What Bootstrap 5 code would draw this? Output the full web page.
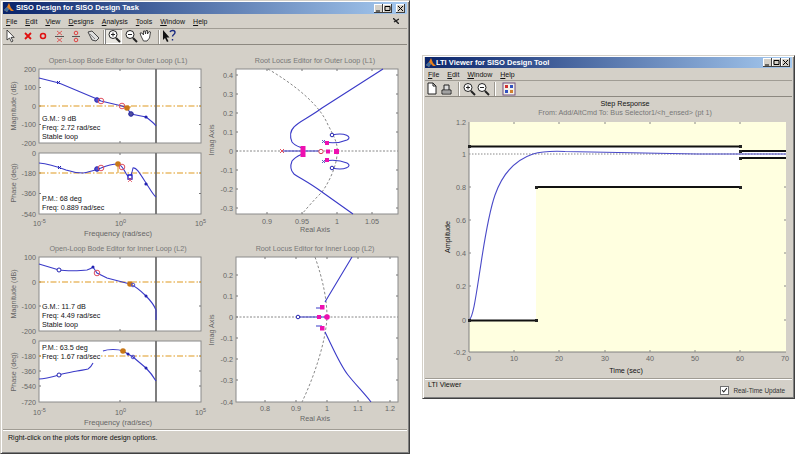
<!DOCTYPE html>
<html lang="en">
<head>
<meta charset="utf-8">
<title>SISO Design</title>
<link href="https://cdn.jsdelivr.net/npm/bootstrap@5.3.0/dist/css/bootstrap.min.css" rel="stylesheet">
<style>
html,body{margin:0;background:#fff;overflow:hidden;}
.stage{position:relative;width:800px;height:454px;font-family:"Liberation Sans",Arial,sans-serif;}
.win{position:absolute;background:#d4d0c8;border:1px solid #d4d0c8;border-right-color:#404040;border-bottom-color:#404040;box-shadow:inset 1px 1px 0 #fff,inset -1px -1px 0 #808080;padding:1px 2px 2px;}
.win-a{left:0;top:0;width:410px;height:454px;}
.win-b{left:422px;top:55px;width:373px;height:344px;}
.tbar{height:12px;flex:none;background:linear-gradient(90deg,#0a246a,#a6caf0);color:#fff;font-weight:700;font-size:7.5px;line-height:12px;padding-right:2px;}
.win-b .tbar{height:11px;line-height:11px;}
.tlogo{width:10px;height:10px;flex:none;margin:0 2px 0 1px;}
.win-b .tlogo{margin-right:0;}
.wbtn{width:9px;height:9px;background:#d4d0c8;box-shadow:inset -1px -1px 0 #404040,inset 1px 1px 0 #fff;display:block;}
.mbar{height:15px;flex:none;font-size:7px;line-height:15px;color:#111;padding-left:3px;border-bottom:1px solid #a09c94;}
.win-b .mbar{height:13px;line-height:13px;}
.mbar u{text-decoration-thickness:1px;text-underline-offset:1px;}
.tools{height:16px;flex:none;border-bottom:1px solid #8c8880;}
.tools-b{gap:2px;}
.tsep{width:2px;height:14px;background:#9c9890;border-right:1px solid #fff;flex:none;}
.tico{display:block;flex:none;}
.pressed{background:#e8e6e0;box-shadow:inset 1px 1px 0 #808080,inset -1px -1px 0 #fff;}
.canvas{display:block;flex:none;}
.canvas text{font-family:"Liberation Sans",Arial,sans-serif;font-size:7.2px;fill:#666;}
.canvas text.dk{fill:#111;}
.canvas text.tt{fill:#777;}
.canvas text.sup{font-size:5.5px;}
.canvas text.fq{font-size:7.6px;}
.stat{flex:1 1 auto;border-top:1px solid #a09c94;box-shadow:inset 0 1px 0 #fff;font-size:7.1px;color:#111;}
.stat-a{padding:3px 5px;line-height:10px;}
.stat-b{padding:2px 3px 0;line-height:9px;}
.chk{width:9px;height:9px;background:#fff;border:1px solid #707070;display:block;flex:none;}
.rtu{color:#333;padding-right:4px;padding-bottom:1px;font-size:6.4px;}
</style>
</head>
<body>
<div class="stage">

<div class="win win-a d-flex flex-column">
  <div class="tbar d-flex align-items-center">
    <svg class="tlogo" viewBox="0 0 10 10"><path d="M0 7 3 4 5 0 7 5 10 8 7 8 5 6 3 9Z" fill="#e8801c"/><path d="M3 4 5 6 3 9 0 7Z" fill="#3a6ea5"/></svg>
    <span class="flex-grow-1">SISO Design for SISO Design Task</span>
    <span class="d-flex">
      <svg class="wbtn" viewBox="0 0 9 9"><path d="M2 7h4" stroke="#000"/></svg>
      <svg class="wbtn" viewBox="0 0 9 9"><path d="M2 2.5h5M2 2.5v4h5v-4" stroke="#000" fill="none"/></svg>
      <svg class="wbtn ms-1" viewBox="0 0 9 9"><path d="M2 2 7 7M7 2 2 7" stroke="#000"/></svg>
    </span>
  </div>
  <div class="mbar d-flex gap-2">
    <span><u>F</u>ile</span><span><u>E</u>dit</span><span><u>V</u>iew</span><span><u>D</u>esigns</span><span><u>A</u>nalysis</span><span><u>T</u>ools</span><span><u>W</u>indow</span><span><u>H</u>elp</span>
    <svg class="ms-auto me-2 mt-1" width="6" height="6" viewBox="0 0 6 6"><path d="M0 0 6 6M1 4 6 1" stroke="#222" stroke-width="1.4"/></svg>
  </div>
  <div class="tools d-flex align-items-center">
    <svg class="tico" width="100" height="15" viewBox="3 29 100 15">
      <path d="M7 30v10l2.500-2 2 4 1.500-1-2-3.600h3.200Z" fill="#fff" stroke="#222" stroke-width=".8"/>
      <path d="M25 33 31 39M31 33 25 39" stroke="#e01010" stroke-width="1.800"/>
      <circle cx="43" cy="36" r="2.500" fill="none" stroke="#e01010" stroke-width="1.500"/>
      <path d="M57 31 62 35M62 31 57 35M57 38 62 42M62 38 57 42" stroke="#e04040" stroke-width=".8"/><path d="M55 36.500h9" stroke="#555"/>
      <circle cx="76" cy="33" r="1.800" fill="none" stroke="#e04040"/><circle cx="76" cy="40" r="1.800" fill="none" stroke="#e04040"/><path d="M72 36.500h8" stroke="#555"/>
      <path d="M88 32 92 31 99 38 96 41 92 40Z" fill="#ddd" stroke="#444"/><path d="M90 34 95 39" stroke="#888"/>
    </svg>
    <span class="tsep"></span>
    <svg class="tico pressed" width="17" height="15" viewBox="105 29 17 15"><circle cx="113" cy="34.500" r="4" fill="#fff" stroke="#222"/><path d="M116 38 120 42" stroke="#222" stroke-width="2"/><path d="M111 34.500h4M113 32.500v4" stroke="#222"/></svg>
    <svg class="tico" width="16" height="15" viewBox="122 29 16 15"><circle cx="130" cy="34.500" r="4" fill="#fff" stroke="#222"/><path d="M133 38 137 42" stroke="#222" stroke-width="2"/><path d="M128 34.500h4" stroke="#222"/></svg>
    <svg class="tico" width="16" height="15" viewBox="139 29 16 15"><path d="M142 36 141 33 143 33 144.500 35 144.500 31 146 31 146.500 34 147 30.500 148.500 30.500 148.500 34 150 31.500 151.500 32 150.500 38 148 41 144.500 41Z" fill="#fff" stroke="#222" stroke-width=".8"/></svg>
    <span class="tsep ms-1"></span>
    <svg class="tico" width="18" height="15" viewBox="160 29 18 15"><path d="M163 30v10l2-2 2 4 1.500-.8-2-3.700h3Z" fill="#111"/><path d="M170 32c1-2 5-2 5 .5 0 2-2.500 2-2.500 4M172.500 39v1.600" stroke="#1a2a80" stroke-width="1.400" fill="none"/></svg>
  </div>
  <svg class="canvas" width="404" height="384" viewBox="3 45 404 384">
    <!-- titles -->
    <text x="118" y="63" text-anchor="middle" class="tt">Open-Loop Bode Editor for Outer Loop (L1)</text>
    <text x="315" y="63" text-anchor="middle" class="tt">Root Locus Editor for Outer Loop (L1)</text>
    <text x="118" y="250.500" text-anchor="middle" class="tt">Open-Loop Bode Editor for Inner Loop (L2)</text>
    <text x="315" y="250.500" text-anchor="middle" class="tt">Root Locus Editor for Inner Loop (L2)</text>

    <!-- frames -->
    <g fill="#fff" stroke="#8a8a8a">
      <rect x="39" y="69" width="162" height="74"/><rect x="39" y="153" width="162" height="61"/>
      <rect x="39" y="257" width="162" height="74"/><rect x="39" y="341" width="162" height="61"/>
      <rect x="236" y="69" width="162" height="145"/><rect x="236" y="257" width="162" height="145"/>
    </g>
    <!-- ticks -->
    <g stroke="#777" fill="none">
      <path d="M39 87.500h2M39 106h2M39 124.500h2M199 87.500h2M199 106h2M199 124.500h2M120 69v2M120 141v2"/>
      <path d="M39 173h2M39 193.500h2M199 173h2M199 193.500h2M120 153v2M120 212v2"/>
      <path d="M39 282h2M39 306h2M199 282h2M199 306h2M120 257v2M120 329v2"/>
      <path d="M39 356h2M39 371h2M39 386h2M199 356h2M199 371h2M199 386h2M120 341v2M120 400v2"/>
      <path d="M267 69v2M302 69v2M337 69v2M372 69v2M267 212v2M302 212v2M337 212v2M372 212v2M236 75h2M236 94h2M236 113h2M236 132h2M236 151h2M236 170h2M236 189h2M236 208h2M396 75h2M396 94h2M396 113h2M396 132h2M396 170h2M396 189h2M396 208h2"/>
      <path d="M265 257v2M296 257v2M327 257v2M358 257v2M390 257v2M265 400v2M296 400v2M327 400v2M358 400v2M390 400v2M236 275h2M236 296h2M236 317h2M236 338h2M236 359h2M236 380h2M396 275h2M396 296h2M396 338h2M396 359h2M396 380h2"/>
    </g>
    <!-- margin lines -->
    <g stroke="#e09a20" stroke-width="1.100" stroke-dasharray="6 2 1.500 2" fill="none">
      <path d="M39 106H201M39 173H201M39 282H201M39 356H201"/>
    </g>
    <path d="M118 164V173M130 108V106" stroke="#e09a20" fill="none"/>
    <!-- delay bars -->
    <path d="M156 69V143M156 153V214M156 257V331M156 341V402" stroke="#707070" stroke-width="1.800"/>

    <!-- bode outer mag -->
    <path d="M39 78 59 83 78 91 97 99 101 101 122 106 127 108 131 114 146 117 C150 120 154 123 156 126" fill="none" stroke="#3a3ac8" stroke-width="1.100"/>
    <path d="M57 81 60 84M57 84 60 81" stroke="#2222b0"/>
    <circle cx="97" cy="100" r="2.300" fill="#5050d0" stroke="#2222b0"/>
    <circle cx="101" cy="101" r="2.800" fill="none" stroke="#e05060" stroke-width="1"/>
    <circle cx="122" cy="106" r="2.800" fill="none" stroke="#e05060" stroke-width="1"/>
    <circle cx="127" cy="108" r="2.800" fill="#c87818"/>
    <circle cx="131" cy="114" r="2.300" fill="#5050a0" stroke="#2222a0"/>
    <circle cx="146" cy="117" r="1.600" fill="#2222b0"/>
    <!-- bode outer phase -->
    <path d="M39 163C50 164 58 167 66 170 72 172 78 173 83 173 90 172 95 170 101 168 108 165 114 164 118 164 122 165 124 170 127 175 129 178 131 178 133 168 136 167 139 172 146 183 150 189 153 195 156 197" fill="none" stroke="#3a3ac8" stroke-width="1.100"/>
    <path d="M58 166 61 169M58 169 61 166" stroke="#2222b0"/>
    <circle cx="97" cy="169" r="2.300" fill="#5050d0" stroke="#2222b0"/>
    <circle cx="101" cy="168" r="2.800" fill="none" stroke="#e05060"/>
    <circle cx="118" cy="164" r="2.800" fill="#c87818"/>
    <circle cx="122" cy="167" r="2.800" fill="none" stroke="#e05060"/>
    <path d="M128 175h4v4h-4Z" fill="#fff" stroke="#1818c0" stroke-width="1.300"/>
    <path d="M128 178 132 182M132 178 128 182" stroke="#e05060" stroke-width=".8"/>
    <circle cx="146" cy="184" r="1.600" fill="#2222b0"/>
    <text class="dk" x="42" y="120.500">G.M.: 9 dB</text><text class="dk" x="42" y="129.500">Freq: 2.72 rad/sec</text><text class="dk" x="42" y="138.500">Stable loop</text>
    <text class="dk" x="42" y="200.500">P.M.: 68 deg</text><text class="dk" x="42" y="209.500">Freq: 0.889 rad/sec</text>

    <!-- bode inner mag -->
    <path d="M39 264 59 270 C65 271 80 271 87 270 90 269 92 268 93 267L97 273 107 278 130 284C137 287 142 292 146 296 150 300 154 305 156 310V320" fill="none" stroke="#3a3ac8" stroke-width="1.100"/>
    <circle cx="59" cy="270" r="2" fill="#fff" stroke="#2222b0"/>
    <circle cx="93" cy="267" r="1.500" fill="#2222b0"/>
    <circle cx="97" cy="273" r="2.800" fill="none" stroke="#e05060"/>
    <circle cx="130" cy="284" r="2.800" fill="#c87818"/>
    <circle cx="133" cy="285" r="1.800" fill="none" stroke="#5050d0"/>
    <circle cx="146" cy="296" r="1.500" fill="#2222b0"/>
    <text class="dk" x="42" y="308.500">G.M.: 11.7 dB</text><text class="dk" x="42" y="317.500">Freq: 4.49 rad/sec</text><text class="dk" x="42" y="326.500">Stable loop</text>
    <!-- bode inner phase -->
    <path d="M39 379C45 379 52 377 59 375 66 373 72 372 77 371 82 370 85 370 88 369 90 368 92 365 93 363" fill="none" stroke="#3a3ac8" stroke-width="1.100"/>
    <rect x="41" y="343" width="60" height="18" fill="#fff"/>
    <path d="M103 351C108 349 118 349 123 351L128 354 133 357 146 368C150 372 153 376 156 381" fill="none" stroke="#3a3ac8" stroke-width="1.100"/>
    <circle cx="59" cy="375" r="2" fill="#fff" stroke="#2222b0"/>
    <circle cx="123" cy="351" r="2.800" fill="#c87818"/>
    <circle cx="128" cy="354" r="1.500" fill="#2222b0"/>
    <circle cx="133" cy="357" r="1.800" fill="none" stroke="#5050d0"/>
    <circle cx="146" cy="368" r="1.500" fill="#2222b0"/>
    <text class="dk" x="42" y="349.500">P.M.: 63.5 deg</text><text class="dk" x="42" y="358.500">Freq: 1.67 rad/sec</text>

    <!-- tick labels bode -->
    <g text-anchor="end">
      <text x="36" y="71.500">200</text><text x="36" y="90">100</text><text x="36" y="108.500">0</text><text x="36" y="127">-100</text><text x="36" y="145.500">-200</text>
      <text x="36" y="155.500">0</text><text x="36" y="175.500">-180</text><text x="36" y="196">-360</text><text x="36" y="216.500">-540</text>
      <text x="36" y="259.500">100</text><text x="36" y="284.500">0</text><text x="36" y="308.500">-100</text><text x="36" y="333.500">-200</text>
      <text x="36" y="343.500">0</text><text x="36" y="358.500">-180</text><text x="36" y="373.500">-360</text><text x="36" y="388.500">-540</text><text x="36" y="404.500">-720</text>
    </g>
    <text x="33" y="226">10</text><text class="sup" x="41" y="222.500">-5</text><text x="115" y="226">10</text><text class="sup" x="123" y="222.500">0</text><text x="195" y="226">10</text><text class="sup" x="203" y="222.500">5</text>
    <text x="33" y="415">10</text><text class="sup" x="41" y="411.500">-5</text><text x="115" y="415">10</text><text class="sup" x="123" y="411.500">0</text><text x="195" y="415">10</text><text class="sup" x="203" y="411.500">5</text>
    <text class="fq" x="118" y="235.500" text-anchor="middle">Frequency (rad/sec)</text>
    <text class="fq" x="118" y="425" text-anchor="middle">Frequency (rad/sec)</text>
    <text transform="translate(15.500 106) rotate(-90)" text-anchor="middle">Magnitude (dB)</text>
    <text transform="translate(15.500 183) rotate(-90)" text-anchor="middle">Phase (deg)</text>
    <text transform="translate(15.500 294) rotate(-90)" text-anchor="middle">Magnitude (dB)</text>
    <text transform="translate(15.500 372) rotate(-90)" text-anchor="middle">Phase (deg)</text>

    <!-- root locus outer -->
    <path d="M236 151H398" stroke="#888" stroke-dasharray="2 1.500"/>
    <path d="M268 69C295 85 320 105 328 125 335 138 338 145 337 151 338 160 332 178 322 192 314 200 307 208 302 214" fill="none" stroke="#888" stroke-dasharray="2.500 2"/>
    <path d="M383 69 322 108 C310 117 298 122 294 127 290 131 290 137 292 142 295 146 300 147 302 148" fill="none" stroke="#3a3ac8" stroke-width="1.100"/>
    <path d="M353 214 322 192 C310 183 298 177 294 174 290 170 290 166 292 161 295 157 300 155 302 154" fill="none" stroke="#3a3ac8" stroke-width="1.100"/>
    <path d="M282 151H321" stroke="#3a3ac8" stroke-width="1.100"/>
    <path d="M332 135C345 132 353 137 347 140 340 143 330 143 324 142" fill="none" stroke="#3a3ac8" stroke-width="1.100"/>
    <path d="M332 168C345 171 353 166 347 163 340 160 330 160 324 161" fill="none" stroke="#3a3ac8" stroke-width="1.100"/>
    <circle cx="332" cy="135" r="1.800" fill="#fff" stroke="#2222b0"/><circle cx="332" cy="168" r="1.800" fill="#fff" stroke="#2222b0"/>
    <path d="M322 140 325 143M325 140 322 143M322 160 325 163M325 160 322 163" stroke="#6060c0"/>
    <path d="M280 149 284 153M284 149 280 153" stroke="#e05060" stroke-width="1"/>
    <circle cx="321" cy="151.500" r="2.200" fill="#fff" stroke="#d04050"/>
    <g fill="#ee10b0">
      <rect x="300.500" y="146" width="5" height="11"/><rect x="326" y="149.500" width="4" height="4"/><rect x="334" y="149" width="5" height="5"/><rect x="325" y="141" width="4" height="4"/><rect x="325" y="158" width="4" height="4"/>
    </g>
    <g text-anchor="end">
      <text x="233" y="77.500">0.4</text><text x="233" y="96.500">0.3</text><text x="233" y="115.500">0.2</text><text x="233" y="134.500">0.1</text><text x="233" y="153.500">0</text><text x="233" y="172.500">-0.1</text><text x="233" y="191.500">-0.2</text><text x="233" y="210.500">-0.3</text>
    </g>
    <g text-anchor="middle">
      <text x="267" y="223.500">0.9</text><text x="302" y="223.500">0.95</text><text x="337" y="223.500">1</text><text x="372" y="223.500">1.05</text>
      <text x="315" y="232">Real Axis</text>
    </g>
    <text transform="translate(214 140) rotate(-90)" text-anchor="middle">Imag Axis</text>

    <!-- root locus inner -->
    <path d="M236 317H398" stroke="#888" stroke-dasharray="2 1.500"/>
    <path d="M315 257C323 280 327 300 327 317 326 340 315 375 302 402" fill="none" stroke="#888" stroke-dasharray="2.500 2"/>
    <path d="M352 257 325 302M325 332C333 348 340 365 348 375 356 385 364 393 371 402" fill="none" stroke="#3a3ac8" stroke-width="1.100"/>
    <path d="M298 317H327M316 308H322M316 326H322" stroke="#3a3ac8" stroke-width="1.100"/>
    <circle cx="298" cy="317" r="1.800" fill="#fff" stroke="#2222b0"/>
    <g fill="#ee10b0">
      <rect x="317" y="315" width="4" height="4"/><rect x="320" y="305" width="4.500" height="4.500"/><rect x="320" y="326" width="4.500" height="4.500"/><circle cx="327" cy="317" r="2.800"/>
    </g>
    <g text-anchor="end">
      <text x="233" y="277.500">0.2</text><text x="233" y="298.500">0.1</text><text x="233" y="319.500">0</text><text x="233" y="340.500">-0.1</text><text x="233" y="361.500">-0.2</text><text x="233" y="382.500">-0.3</text><text x="233" y="404.500">-0.4</text>
    </g>
    <g text-anchor="middle">
      <text x="265" y="410.500">0.8</text><text x="296" y="410.500">0.9</text><text x="327" y="410.500">1</text><text x="358" y="410.500">1.1</text><text x="390" y="410.500">1.2</text>
      <text x="315" y="420.500">Real Axis</text>
    </g>
    <text transform="translate(214 330) rotate(-90)" text-anchor="middle">Imag Axis</text>
  </svg>
  <div class="stat stat-a">Right-click on the plots for more design options.</div>
</div>

<div class="win win-b d-flex flex-column">
  <div class="tbar d-flex align-items-center">
    <svg class="tlogo" viewBox="0 0 10 10"><path d="M0 7 3 4 5 0 7 5 10 8 7 8 5 6 3 9Z" fill="#e8801c"/><path d="M3 4 5 6 3 9 0 7Z" fill="#3a6ea5"/></svg>
    <span class="flex-grow-1">LTI Viewer for SISO Design Tool</span>
    <span class="d-flex">
      <svg class="wbtn" viewBox="0 0 9 9"><path d="M2 7h4" stroke="#000"/></svg>
      <svg class="wbtn" viewBox="0 0 9 9"><path d="M2 2.500h5M2 2.500v4h5v-4" stroke="#000" fill="none"/></svg>
      <svg class="wbtn" viewBox="0 0 9 9"><path d="M2 2 7 7M7 2 2 7" stroke="#000"/></svg>
    </span>
  </div>
  <div class="mbar d-flex gap-2">
    <span><u>F</u>ile</span><span><u>E</u>dit</span><span><u>W</u>indow</span><span><u>H</u>elp</span>
  </div>
  <div class="tools tools-b d-flex align-items-center">
    <svg class="tico" width="31" height="15" viewBox="425 81 31 15"><path d="M428 83h5l3 3v8h-8Z" fill="#fff" stroke="#222"/><path d="M433 83v3h3" fill="none" stroke="#222"/><path d="M442 90h9v4h-9ZM444 90v-5h5v5" fill="#ddd" stroke="#222"/><path d="M443 92h7" stroke="#666"/></svg>
    <span class="tsep"></span>
    <svg class="tico" width="30" height="15" viewBox="460 81 30 15"><circle cx="466" cy="87.500" r="4" fill="#fff" stroke="#222"/><path d="M469 91 473 95" stroke="#222" stroke-width="2"/><path d="M464 87.500h4M466 85.500v4" stroke="#222"/><circle cx="480" cy="87.500" r="4" fill="#fff" stroke="#222"/><path d="M483 91 487 95" stroke="#222" stroke-width="2"/><path d="M478 87.500h4" stroke="#222"/></svg>
    <span class="tsep"></span>
    <svg class="tico ms-1" width="14" height="14" viewBox="0 0 14 14"><rect x="1" y="1" width="12" height="12" fill="#f4f0e8" stroke="#705080"/><rect x="3" y="3" width="3" height="3" fill="#d03030"/><rect x="8" y="3" width="3" height="3" fill="#3050c0"/><rect x="3" y="8" width="3" height="3" fill="#3050c0"/><rect x="8" y="8" width="3" height="3" fill="#d08030"/></svg>
  </div>
  <svg class="canvas" width="367" height="281" viewBox="425 97 367 281">
    <text class="dk" x="625" y="105.500" text-anchor="middle">Step Response</text>
    <text x="625" y="114.500" text-anchor="middle" class="tt">From: Add/AltCmd  To: Bus Selector1/&lt;h_ensed&gt; (pt 1)</text>
    <rect x="469" y="122" width="317" height="230" fill="#ffffe0"/>
    <path d="M469 147H740V152H786V158H740V187H536V320H469Z" fill="#fff"/>
    <path d="M469 122V352H786" fill="none" stroke="#808080"/>
    <path d="M514 122v2M514 350v2M559 122v2M559 350v2M605 122v2M605 350v2M650 122v2M650 350v2M695 122v2M695 350v2M740 122v2M740 350v2M469 187h2M469 220h2M469 253h2M469 286h2M784 187h2M784 220h2M784 253h2M784 286h2M784 320h2" stroke="#888"/>
    <path d="M469 154H786" stroke="#888" stroke-dasharray="1.500 1.500"/>
    <path d="M469 320C473 318 476 296 480 270 484 244 488 215 495 195 502 175 515 160 533 154 543 151 553 151 565 151.500 600 152 640 153 697 154H786" fill="none" stroke="#4a4ac8" stroke-width="1.100"/>
    <g stroke="#111" stroke-width="1.800" fill="none">
      <path d="M469 146.500H740M740 151H786M740 158H786M536 187H740M469 320.500H536"/>
    </g>
    <g fill="#222">
      <rect x="468" y="145" width="3" height="3"/><rect x="739" y="145" width="3" height="3"/><rect x="739" y="150" width="3" height="3"/><rect x="739" y="157" width="3" height="3"/><rect x="535" y="186" width="3" height="3"/><rect x="739" y="186" width="3" height="3"/><rect x="468" y="319" width="3" height="3"/><rect x="535" y="319" width="3" height="3"/>
    </g>
    <g text-anchor="end">
      <text x="466" y="124.500">1.2</text><text x="466" y="156.500">1</text><text x="466" y="189.500">0.8</text><text x="466" y="222.500">0.6</text><text x="466" y="255.500">0.4</text><text x="466" y="288.500">0.2</text><text x="466" y="322.500">0</text><text x="466" y="354.500">-0.2</text>
    </g>
    <g text-anchor="middle">
      <text x="469" y="360.500">0</text><text x="514" y="360.500">10</text><text x="559" y="360.500">20</text><text x="605" y="360.500">30</text><text x="650" y="360.500">40</text><text x="695" y="360.500">50</text><text x="740" y="360.500">60</text><text x="785" y="360.500">70</text>
      <text class="dk" x="626" y="372.500">Time (sec)</text>
    </g>
    <text class="dk" transform="translate(450 237) rotate(-90)" text-anchor="middle">Amplitude</text>
  </svg>
  <div class="stat stat-b d-flex justify-content-between">
    <span>LTI Viewer</span>
    <span class="d-flex align-items-center gap-1 align-self-end rtu"><svg class="chk" viewBox="0 0 9 9"><path d="M1.500 4 3.500 6.500 7.500 1.500" fill="none" stroke="#222" stroke-width="1.300"/></svg>Real-Time Update</span>
  </div>
</div>

</div>
<script src="https://cdn.jsdelivr.net/npm/bootstrap@5.3.0/dist/js/bootstrap.bundle.min.js"></script>
</body>
</html>
